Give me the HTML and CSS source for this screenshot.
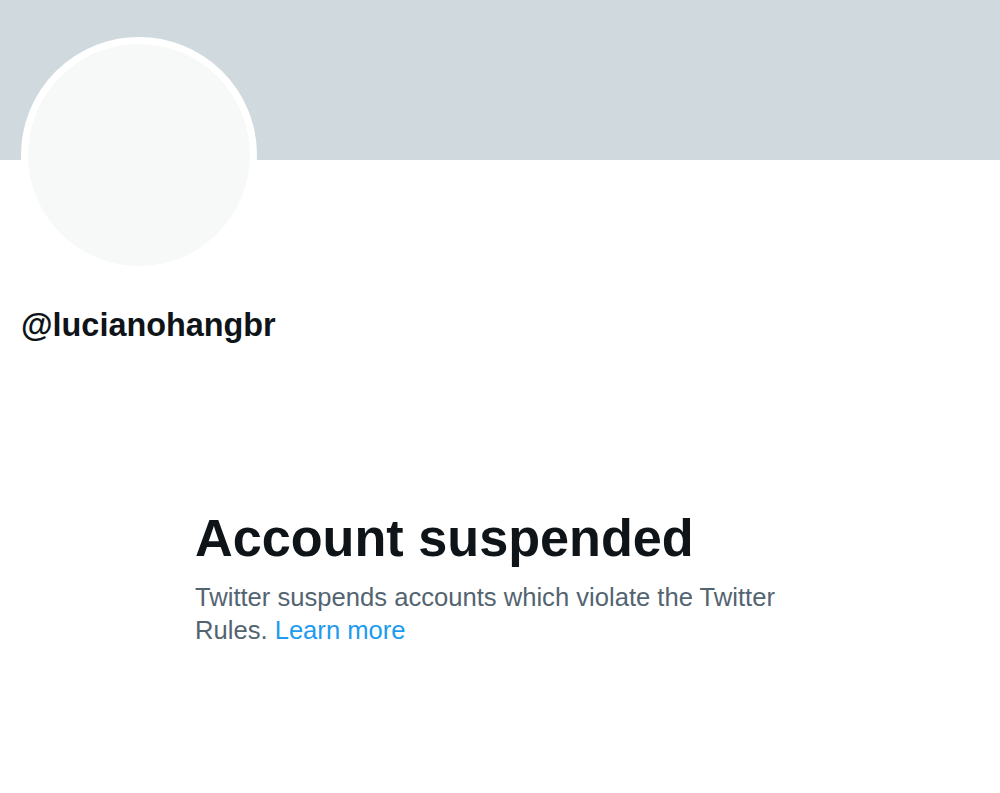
FILE: index.html
```html
<!DOCTYPE html>
<html>
<head>
  <title>@lucianohangbr / Twitter</title>
  <link rel="stylesheet" href="styles.css">
</head>
<body>
  <div class="banner"></div>
  <div class="profile">
    <div class="avatar"></div>
    <div class="handle">@lucianohangbr</div>
  </div>
  <div class="suspended">
    <h1>Account suspended</h1>
    <p>Twitter suspends accounts which violate the Twitter Rules. <a href="#">Learn more</a></p>
  </div>
</body>
</html>
```

FILE: styles.css
```css
body {
    margin: 0;
    background-color: #ffffff;
    font-family: "Liberation Sans", Arial, sans-serif;
    color: #0f1419;
}
.banner {
    height: 160px;
    background-color: #cfd9de;
}
.profile {
    padding-left: 21px;
}
.avatar {
    width: 222px;
    height: 222px;
    margin-top: -123px;
    border: 7px solid #ffffff;
    border-radius: 50%;
    background-color: #f7f9f9;
}
.handle {
    margin-top: 32px;
    font-size: 32.4px;
    line-height: 40px;
    font-weight: bold;
}
.suspended {
    margin-top: 163px;
    padding-left: 195px;
    max-width: 610px;
}
h1 {
    margin: 0;
    font-size: 52.2px;
    line-height: 60px;
    font-weight: bold;
}
p {
    margin: 13px 0 0;
    font-size: 25.6px;
    line-height: 33px;
    color: #536471;
}
a {
    color: #1d9bf0;
    text-decoration: none;
}
```
